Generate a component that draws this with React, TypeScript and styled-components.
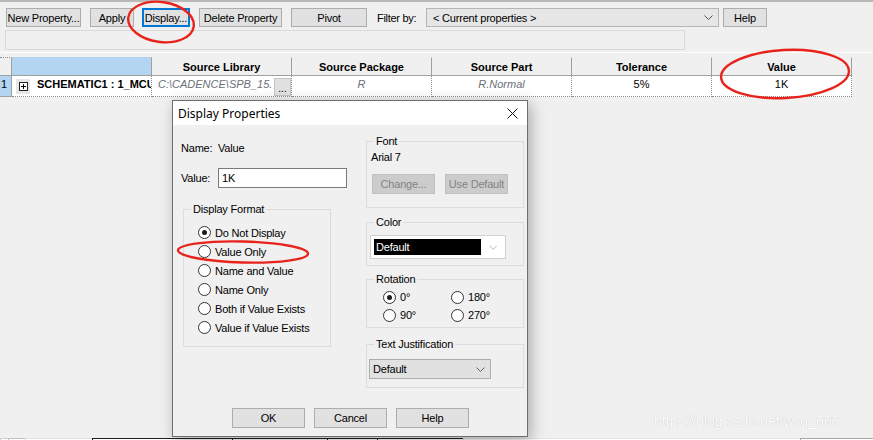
import React from "react";
import styled, { createGlobalStyle } from "styled-components";

const GlobalStyle = createGlobalStyle`
  html, body, #root { margin: 0; height: 100%; }
  body {
    background: #f0f0f0;
    font-family: "Liberation Sans", Arial, sans-serif;
    font-size: 11px;
    color: #000;
    overflow: hidden;
  }
  * { box-sizing: border-box; }
`;

const Page = styled.div`
  position: relative;
  height: 440px;
  display: flex;
  flex-direction: column;
`;

const TopRule = styled.div`
  height: 2px;
  flex: none;
  background: #b9b9b9;
`;

/* ---------- property editor toolbar ---------- */

const Toolbar = styled.div`
  display: flex;
  align-items: center;
  margin-top: 6px;
  height: 19px;
`;

const ToolButton = styled.div<{ $w: number; $ml: number; $focused?: boolean }>`
  width: ${(p) => p.$w}px;
  height: 19px;
  margin-left: ${(p) => p.$ml}px;
  display: flex;
  align-items: center;
  justify-content: center;
  background: #e1e1e1;
  border: ${(p) => (p.$focused ? "2px solid #0078d7" : "1px solid #adadad")};
  letter-spacing: -0.2px;
  white-space: nowrap;
`;

const FilterLabel = styled.span`
  margin-left: 10px;
  width: 49px;
  letter-spacing: -0.3px;
`;

const FilterCombo = styled.div`
  width: 293px;
  height: 19px;
  display: flex;
  align-items: center;
  justify-content: space-between;
  padding: 0 5px 0 6px;
  background: #e6e6e6;
  border: 1px solid #b5b5b5;
  letter-spacing: -0.2px;
`;

const SearchBox = styled.div`
  width: 680px;
  height: 20px;
  margin: 3px 0 0 5px;
  border: 1px solid #d9d9d9;
  background: #f0f0f0;
`;

const Divider = styled.div`
  height: 1px;
  margin-top: 2px;
  background: #fdfdfd;
`;

/* ---------- property sheet ---------- */

const Sheet = styled.div`
  margin-top: 4px;
  width: 852px;
  display: grid;
  grid-template-columns: 12px repeat(6, 140px);
`;

const HeadCell = styled.div<{ $blue?: boolean; $corner?: boolean }>`
  height: 19px;
  display: flex;
  align-items: center;
  justify-content: center;
  font-weight: bold;
  background: ${(p) => (p.$blue ? "#b3d5f2" : "#f0f0f0")};
  border-right: 1px solid #a0a0a0;
  border-bottom: 1px solid #a0a0a0;
  border-top: ${(p) => (p.$corner ? "1px dotted #8a8a8a" : "1px solid transparent")};
`;

const RowHead = styled.div`
  height: 21px;
  background: #b3d5f2;
  border-right: 1px solid #a0a0a0;
  border-bottom: 1px solid #a0a0a0;
  padding: 1px 0 0 1px;
  line-height: 14px;
`;

const Cell = styled.div<{ $align?: "left" | "center"; $muted?: boolean; $bold?: boolean }>`
  height: 21px;
  display: flex;
  align-items: flex-start;
  justify-content: ${(p) => (p.$align === "left" ? "flex-start" : "center")};
  padding-top: 1px;
  line-height: 14px;
  overflow: hidden;
  white-space: nowrap;
  background: #fff;
  border-right: 1px dotted #8c8c8c;
  border-bottom: 1px dotted #8c8c8c;
  color: ${(p) => (p.$muted ? "#6b6f7a" : "#000")};
  font-style: ${(p) => (p.$muted ? "italic" : "normal")};
  font-weight: ${(p) => (p.$bold ? "bold" : "normal")};
`;

const Expander = styled.span`
  flex: none;
  width: 14px;
  height: 15px;
  margin: 2px 7px 0 4px;
  background: #e6e6e6;
  display: flex;
  align-items: center;
  justify-content: center;
`;

const CellText = styled.span<{ $pl?: number }>`
  padding-left: ${(p) => p.$pl ?? 0}px;
  overflow: hidden;
`;

const EllipsisButton = styled.span`
  flex: none;
  margin-left: auto;
  margin-top: 1px;
  width: 17px;
  height: 18px;
  background: #e1e1e1;
  border: 1px solid #c4c4c4;
  font-style: normal;
  color: #000;
  font-size: 10px;
  display: flex;
  align-items: flex-end;
  justify-content: center;
  line-height: 12px;
`;

const Filler = styled.div`
  flex: 1;
`;

const BottomStrip = styled.div`
  height: 2px;
  display: flex;
`;

const StripCell = styled.div<{ $w: number; $tone: string }>`
  width: ${(p) => p.$w}px;
  border-top: 1px solid ${(p) => p.$tone};
  border-left: 1px solid ${(p) => p.$tone};
  background: #fff;
`;

/* ---------- Display Properties dialog ---------- */

const Dialog = styled.div`
  position: absolute;
  left: 172px;
  top: 100px;
  width: 356px;
  height: 337px;
  z-index: 2;
  background: #f0f0f0;
  border: 1px solid #6e6e6e;
  box-shadow: 3px 4px 14px rgba(0, 0, 0, 0.3);
  display: flex;
  flex-direction: column;
  letter-spacing: -0.2px;
`;

const TitleBar = styled.div`
  height: 24px;
  flex: none;
  background: #fff;
  display: flex;
  align-items: center;
  justify-content: space-between;
  padding: 0 9px 0 5px;
  font-family: "Noto Sans", "Liberation Sans", sans-serif;
  font-size: 12px;
  letter-spacing: 0;
`;

const DialogBody = styled.div`
  display: grid;
  grid-template-columns: 150px 158px;
  column-gap: 35px;
  padding: 0 3px 0 8px;
  align-items: start;
`;

const Column = styled.div`
  display: flex;
  flex-direction: column;
`;

const FieldRow = styled.div<{ $mt: number; $h: number }>`
  display: grid;
  grid-template-columns: 37px auto;
  align-items: center;
  margin-top: ${(p) => p.$mt}px;
  height: ${(p) => p.$h}px;
`;

const TextBox = styled.div`
  width: 129px;
  height: 20px;
  background: #fff;
  border: 1px solid #7a7a7a;
  padding-left: 3px;
  display: flex;
  align-items: center;
`;

const Group = styled.div<{ $mt: number; $pb: number; $ml?: number; $w?: number }>`
  margin-top: ${(p) => p.$mt}px;
  margin-left: ${(p) => p.$ml ?? 0}px;
  width: ${(p) => (p.$w ? `${p.$w}px` : "auto")};
  padding-bottom: ${(p) => p.$pb}px;
  border: 1px solid #dcdcdc;
  display: flex;
  flex-direction: column;
  align-items: flex-start;
`;

const Legend = styled.span`
  margin: -8px 0 0 7px;
  padding: 0 2px;
  line-height: 14px;
  background: #f0f0f0;
`;

const Line = styled.div<{ $mt: number; $ml: number }>`
  margin: ${(p) => p.$mt}px 0 0 ${(p) => p.$ml}px;
  line-height: 14px;
`;

const ButtonPair = styled.div`
  display: flex;
  gap: 10px;
  margin: 10px 0 0 5px;
`;

const DlgButton = styled.div<{ $w: number; $disabled?: boolean }>`
  width: ${(p) => p.$w}px;
  height: 20px;
  display: flex;
  align-items: center;
  justify-content: center;
  background: ${(p) => (p.$disabled ? "#cccccc" : "#e1e1e1")};
  border: 1px solid ${(p) => (p.$disabled ? "#bfbfbf" : "#adadad")};
  color: ${(p) => (p.$disabled ? "#838383" : "#000")};
`;

const ColorCombo = styled.div`
  margin: 6px 0 0 3px;
  width: 136px;
  height: 24px;
  background: #fff;
  border: 1px solid #d0d0d0;
  display: flex;
  align-items: center;
  padding: 0 8px 0 3px;
  gap: 8px;
`;

const ColorSwatch = styled.div`
  width: 113px;
  height: 16px;
  background: #000;
  color: #fff;
  padding-left: 2px;
  display: flex;
  align-items: center;
`;

const RadioList = styled.div`
  margin: 7px 0 0 14px;
  display: flex;
  flex-direction: column;
`;

const RadioGrid = styled.div`
  margin: 4px 0 0 16px;
  display: grid;
  grid-template-columns: 68px 68px;
  row-gap: 4px;
`;

const RadioRow = styled.div<{ $h: number }>`
  height: ${(p) => p.$h}px;
  display: flex;
  align-items: center;
  gap: 4px;
  white-space: nowrap;
`;

const RadioDot = styled.span<{ $on?: boolean }>`
  flex: none;
  width: 13px;
  height: 13px;
  border-radius: 50%;
  border: 1px solid #333;
  background: #fff;
  display: flex;
  align-items: center;
  justify-content: center;

  &::after {
    content: "";
    width: 5px;
    height: 5px;
    border-radius: 50%;
    background: ${(p) => (p.$on ? "#1b1b1b" : "transparent")};
  }
`;

const SelectBox = styled.div`
  margin: 8px 0 0 2px;
  width: 122px;
  height: 20px;
  background: #e1e1e1;
  border: 1px solid #adadad;
  display: flex;
  align-items: center;
  justify-content: space-between;
  padding: 0 5px 0 3px;
`;

const ButtonRow = styled.div`
  display: flex;
  gap: 9px;
  margin: 20px 0 0 59px;
`;

/* ---------- overlays ---------- */

const Watermark = styled.div`
  position: absolute;
  left: 654px;
  top: 413px;
  z-index: 3;
  font-size: 14px;
  color: #fff;
  text-shadow: 0 0 1px rgba(0, 0, 0, 0.25);
`;

const Marks = styled.svg`
  position: absolute;
  left: 0;
  top: 0;
  z-index: 4;
  pointer-events: none;
`;

function Chevron({ color }: { color: string }) {
  return (
    <svg width="9" height="5" viewBox="0 0 9 5">
      <path d="M0.5 0.5 L4.5 4.5 L8.5 0.5" fill="none" stroke={color} strokeWidth="1" />
    </svg>
  );
}

function Radio({ label, on, h = 19 }: { label: string; on?: boolean; h?: number }) {
  return (
    <RadioRow $h={h}>
      <RadioDot $on={on} />
      <span>{label}</span>
    </RadioRow>
  );
}

const columns = ["Source Library", "Source Package", "Source Part", "Tolerance", "Value"];

export default function App() {
  return (
    <>
      <GlobalStyle />
      <Page>
        <TopRule />
        <Toolbar>
          <ToolButton $w={75} $ml={6}>New Property...</ToolButton>
          <ToolButton $w={44} $ml={9}>Apply</ToolButton>
          <ToolButton $w={48} $ml={8} $focused>Display...</ToolButton>
          <ToolButton $w={83} $ml={9}>Delete Property</ToolButton>
          <ToolButton $w={76} $ml={9}>Pivot</ToolButton>
          <FilterLabel>Filter by:</FilterLabel>
          <FilterCombo>
            <span>&lt; Current properties &gt;</span>
            <Chevron color="#555" />
          </FilterCombo>
          <ToolButton $w={44} $ml={4}>Help</ToolButton>
        </Toolbar>
        <SearchBox />
        <Divider />

        <Sheet>
          <HeadCell $corner />
          <HeadCell $blue />
          {columns.map((title) => (
            <HeadCell key={title}>{title}</HeadCell>
          ))}

          <RowHead>1</RowHead>
          <Cell $align="left" $bold>
            <Expander>
              <svg width="9" height="9" viewBox="0 0 9 9">
                <rect x="0.5" y="0.5" width="8" height="8" fill="#fff" stroke="#222" />
                <path d="M2 4.5 H7 M4.5 2 V7" stroke="#000" strokeWidth="1" />
              </svg>
            </Expander>
            <CellText>SCHEMATIC1 : 1_MCU</CellText>
          </Cell>
          <Cell $align="left" $muted>
            <CellText $pl={6}>C:\CADENCE\SPB_15.</CellText>
            <EllipsisButton>...</EllipsisButton>
          </Cell>
          <Cell $muted>R</Cell>
          <Cell $muted>R.Normal</Cell>
          <Cell>5%</Cell>
          <Cell>1K</Cell>
        </Sheet>

        <Filler />
        <BottomStrip>
          <StripCell $w={8} $tone="#d0d0d0" />
          <StripCell $w={17} $tone="#c0c0c0" />
          <StripCell $w={67} $tone="#e0e0e0" />
          <StripCell $w={140} $tone="#202020" />
          <StripCell $w={95} $tone="#202020" />
          <StripCell $w={50} $tone="#202020" />
          <StripCell $w={86} $tone="#202020" />
          <StripCell $w={337} $tone="#e4e4e4" />
          <StripCell $w={73} $tone="#a8a8a8" />
        </BottomStrip>

        <Dialog>
          <TitleBar>
            <span>Display Properties</span>
            <svg width="11" height="11" viewBox="0 0 11 11">
              <path d="M0.5 0.5 L10.5 10.5 M10.5 0.5 L0.5 10.5" stroke="#111" strokeWidth="1" />
            </svg>
          </TitleBar>
          <DialogBody>
            <Column>
              <FieldRow $mt={16} $h={14}>
                <span>Name:</span>
                <span>Value</span>
              </FieldRow>
              <FieldRow $mt={13} $h={20}>
                <span>Value:</span>
                <TextBox>1K</TextBox>
              </FieldRow>
              <Group $mt={21} $pb={9} $ml={2} $w={148}>
                <Legend>Display Format</Legend>
                <RadioList>
                  <Radio label="Do Not Display" on />
                  <Radio label="Value Only" />
                  <Radio label="Name and Value" />
                  <Radio label="Name Only" />
                  <Radio label="Both if Value Exists" />
                  <Radio label="Value if Value Exists" />
                </RadioList>
              </Group>
            </Column>

            <Column>
              <Group $mt={16} $pb={13}>
                <Legend>Font</Legend>
                <Line $mt={2} $ml={4}>Arial 7</Line>
                <ButtonPair>
                  <DlgButton $w={63} $disabled>Change...</DlgButton>
                  <DlgButton $w={63} $disabled>Use Default</DlgButton>
                </ButtonPair>
              </Group>
              <Group $mt={14} $pb={6}>
                <Legend>Color</Legend>
                <ColorCombo>
                  <ColorSwatch>Default</ColorSwatch>
                  <Chevron color="#b4b4b4" />
                </ColorCombo>
              </Group>
              <Group $mt={13} $pb={5}>
                <Legend>Rotation</Legend>
                <RadioGrid>
                  <Radio label="0°" on h={14} />
                  <Radio label="180°" h={14} />
                  <Radio label="90°" h={14} />
                  <Radio label="270°" h={14} />
                </RadioGrid>
              </Group>
              <Group $mt={16} $pb={8}>
                <Legend>Text Justification</Legend>
                <SelectBox>
                  <span>Default</span>
                  <Chevron color="#606060" />
                </SelectBox>
              </Group>
            </Column>
          </DialogBody>
          <ButtonRow>
            <DlgButton $w={73}>OK</DlgButton>
            <DlgButton $w={73}>Cancel</DlgButton>
            <DlgButton $w={73}>Help</DlgButton>
          </ButtonRow>
        </Dialog>

        <Watermark>https://blog.csdn.net/wsq_666</Watermark>

        <Marks width="873" height="440" viewBox="0 0 873 440">
          <g fill="none" stroke="#e8231c" strokeWidth="2.4">
            <ellipse cx="161" cy="22" rx="33" ry="20" transform="rotate(8 161 22)" />
            <ellipse cx="785" cy="74" rx="64" ry="24" transform="rotate(-3 785 74)" />
            <ellipse cx="243" cy="252" rx="65" ry="10.5" transform="rotate(1.5 243 252)" />
          </g>
        </Marks>
      </Page>
    </>
  );
}
